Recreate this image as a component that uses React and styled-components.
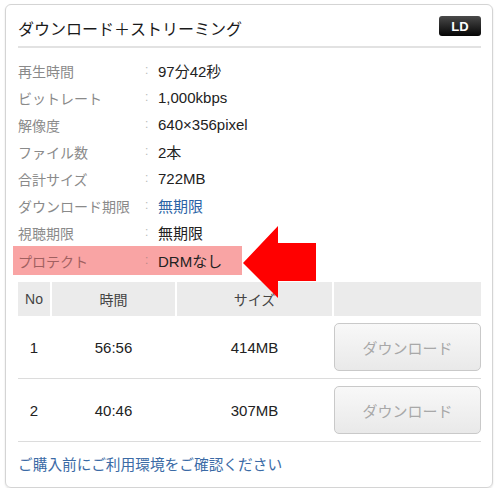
import React from "react";
import styled, { createGlobalStyle } from "styled-components";

const Global = createGlobalStyle`
  html, body { margin: 0; padding: 0; background: #fff; }
  body { font-family: "Liberation Sans", "Noto Sans CJK JP", sans-serif; }
`;

const Card = styled.div`
  position: relative;
  box-sizing: border-box;
  width: 488px;
  height: 484px;
  margin: 4px 0 0 5px;
  border: 1px solid #d4d4d4;
  border-radius: 6px;
  box-shadow: 0 1px 2px rgba(0, 0, 0, 0.12);
  padding: 0 11px 0 12px;
  display: flex;
  flex-direction: column;
`;

const Header = styled.div`
  display: flex;
  align-items: center;
  justify-content: space-between;
  height: 37px;
  padding-top: 4px;
  border-bottom: 2px solid #e2e2e2;
`;

const Title = styled.h2`
  margin: 0;
  font-size: 16px;
  font-weight: normal;
  color: #1a1a1a;
  letter-spacing: 0;
`;

const Badge = styled.span`
  display: inline-flex;
  align-items: center;
  justify-content: center;
  width: 42px;
  height: 20px;
  margin-top: -3px;
  border-radius: 3px;
  background: linear-gradient(#4a4a4a, #050505);
  color: #fff;
  font-weight: bold;
  font-size: 13px;
`;

const InfoList = styled.div`
  margin-top: 9px;
  display: flex;
  flex-direction: column;
`;

const InfoRow = styled.div`
  display: grid;
  grid-template-columns: 127px 13px 1fr;
  align-items: center;
  height: 27px;
  font-size: 14px;
  ${(p) =>
    p.$highlight &&
    `
    background: #f9a4a4;
    margin-left: -5px;
    padding-left: 5px;
    width: 224px;
    height: 29px;
    margin-top: 0;
  `}
`;

const Label = styled.span`
  color: ${(p) => (p.$highlight ? "#a06060" : "#8a8a8a")};
`;

const Colon = styled.span`
  color: ${(p) => (p.$highlight ? "#b88" : "#bbb")};
  font-size: 12px;
  margin-top: -2px;
`;

const Value = styled.span`
  color: ${(p) => (p.$link ? "#2c64a6" : "#222")};
  font-size: 15px;
`;

const Table = styled.div`
  margin-top: 7px;
  display: flex;
  flex-direction: column;
`;

const HeadRow = styled.div`
  display: grid;
  grid-template-columns: 32px 123px 155px 1fr;
  column-gap: 2px;
  height: 34px;
`;

const HeadCell = styled.div`
  background: #ebebeb;
  display: flex;
  align-items: center;
  justify-content: center;
  font-size: 14px;
  color: #444;
`;

const DataRow = styled.div`
  display: grid;
  grid-template-columns: 32px 123px 155px 1fr;
  column-gap: 2px;
  align-items: center;
  height: 62px;
  border-bottom: 1px solid #dcdcdc;
`;

const DataCell = styled.div`
  display: flex;
  justify-content: center;
  font-size: 15px;
  color: #222;
`;

const DownloadButton = styled.button`
  box-sizing: border-box;
  width: 147px;
  height: 48px;
  border: 1px solid #c9c9c9;
  border-radius: 5px;
  background: linear-gradient(#f8f8f8, #e9e9e9);
  color: #a8a8a8;
  font-family: "Liberation Sans", "Noto Sans CJK JP", sans-serif;
  font-size: 15px;
  padding: 0;
`;

const Footer = styled.a`
  display: flex;
  align-items: center;
  height: 43px;
  font-size: 14.7px;
  color: #3b6ba6;
  text-decoration: none;
`;

const Arrow = styled.svg`
  position: absolute;
  left: 0;
  top: 0;
  pointer-events: none;
`;

const info = [
  ["再生時間", "97分42秒"],
  ["ビットレート", "1,000kbps"],
  ["解像度", "640×356pixel"],
  ["ファイル数", "2本"],
  ["合計サイズ", "722MB"],
  ["ダウンロード期限", "無期限", true],
  ["視聴期限", "無期限"],
];

const files = [
  ["1", "56:56", "414MB"],
  ["2", "40:46", "307MB"],
];

export default function App() {
  return (
    <>
      <Global />
      <Card>
        <Header>
          <Title>ダウンロード＋ストリーミング</Title>
          <Badge>LD</Badge>
        </Header>
        <InfoList>
          {info.map(([l, v, link]) => (
            <InfoRow key={l}>
              <Label>{l}</Label>
              <Colon>:</Colon>
              <Value $link={link}>{v}</Value>
            </InfoRow>
          ))}
          <InfoRow $highlight>
            <Label $highlight>プロテクト</Label>
            <Colon $highlight>:</Colon>
            <Value>DRMなし</Value>
          </InfoRow>
        </InfoList>
        <Table>
          <HeadRow>
            <HeadCell>No</HeadCell>
            <HeadCell>時間</HeadCell>
            <HeadCell>サイズ</HeadCell>
            <HeadCell />
          </HeadRow>
          {files.map(([n, t, s]) => (
            <DataRow key={n}>
              <DataCell>{n}</DataCell>
              <DataCell>{t}</DataCell>
              <DataCell>{s}</DataCell>
              <DataCell>
                <DownloadButton>ダウンロード</DownloadButton>
              </DataCell>
            </DataRow>
          ))}
        </Table>
        <Footer href="#">ご購入前にご利用環境をご確認ください</Footer>
        <Arrow width="488" height="484" viewBox="0 0 488 484">
          <polygon
            points="237,258 272,221 272,238 310,238 310,276 272,276 272,293"
            fill="#ff0000"
          />
        </Arrow>
      </Card>
    </>
  );
}
